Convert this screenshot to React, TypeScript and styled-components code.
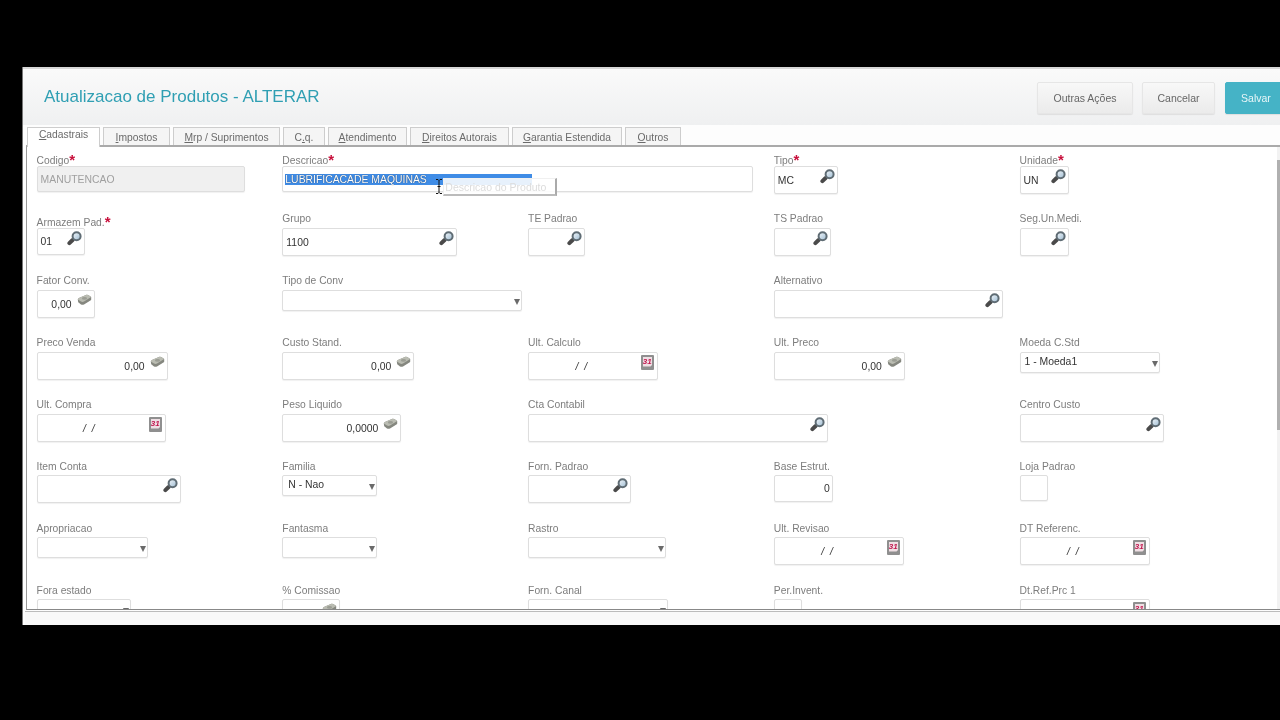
import React from "react";
import styled, { createGlobalStyle } from "styled-components";

const Global = createGlobalStyle`
  html, body { margin: 0; padding: 0; background: #000; overflow: hidden; }
  body { font-family: "Liberation Sans", Arial, sans-serif; }
`;

const Stage = styled.div`
  width: 1280px;
  height: 720px;
  background: #000;
  padding: 67px 0 0 22px;
  box-sizing: border-box;
  overflow: hidden;
`;
const Win = styled.div`
  width: 1258px;
  height: 558px;
  background: #fdfdfd;
  border-left: 1px solid #777;
  box-sizing: border-box;
  overflow: hidden;
  display: flex;
  flex-direction: column;
  filter: blur(0.45px);
`;
const Header = styled.header`
  height: 58px;
  flex: none;
  box-sizing: border-box;
  border-top: 2px solid #d8d8d8;
  background: linear-gradient(#fafafa, #eff0f1);
  display: flex;
  align-items: center;
  justify-content: space-between;
  padding-left: 21px;
`;
const Title = styled.h1`
  margin: 0;
  font-size: 17px;
  font-weight: 400;
  color: #2f9fb3;
`;
const Actions = styled.div`
  display: flex;
  gap: 9px;
  margin-right: -7px;
  margin-top: 2px;
`;
const Action = styled.button<{ $w: number; $primary?: boolean }>`
  width: ${(p) => p.$w}px;
  height: 32px;
  font: 10.5px "Liberation Sans", sans-serif;
  border-radius: 2px;
  border: 1px solid ${(p) => (p.$primary ? "#45b3c6" : "#e6e6e6")};
  background: ${(p) => (p.$primary ? "#45b3c6" : "linear-gradient(#f8f8f8,#ebebeb)")};
  color: ${(p) => (p.$primary ? "#e8f6f8" : "#666")};
  box-shadow: 0 1px 1px rgba(0, 0, 0, 0.08);
  padding: 0;
  flex: none;
  margin-left: ${(p) => (p.$primary ? 1 : 0)}px;
`;
const TabBar = styled.nav`
  height: 20px;
  flex: none;
  display: flex;
  gap: 3px;
  padding: 2px 0 0 4px;
  box-sizing: border-box;
  background: #fdfdfd;
  position: relative;
  z-index: 1;
`;
const Tab = styled.div<{ $w: number; $active?: boolean }>`
  width: ${(p) => p.$w}px;
  height: ${(p) => (p.$active ? 20 : 18)}px;
  box-sizing: border-box;
  border: 1px solid #cdcdcd;
  border-bottom: ${(p) => (p.$active ? "none" : "0")};
  background: ${(p) => (p.$active ? "#fff" : "#f5f5f5")};
  font-size: 10.3px;
  color: #6b6b6b;
  text-align: center;
  line-height: ${(p) => (p.$active ? 14 : 19)}px;
  flex: none;
`;
const Panel = styled.main`
  flex: none;
  height: 465px;
  margin-left: 3px;
  box-sizing: border-box;
  border-top: 2px solid #aaa;
  border-left: 1px solid #999;
  border-bottom: 1px solid #888;
  background: #fff;
  overflow: hidden;
  position: relative;
  padding: 8px 0 0 9.6px;
`;
const Form = styled.div`
  display: grid;
  grid-template-columns: repeat(5, 245.75px);
  grid-template-rows: 58px repeat(7, 62px);
`;
const Cell = styled.div`
  display: flex;
  flex-direction: column;
  align-items: flex-start;
`;
const Label = styled.label<{ $gap: number; $drop?: number }>`
  height: 12px;
  line-height: 12px;
  font-size: 10.3px;
  color: #7d7d7d;
  white-space: nowrap;
  margin-top: ${(p) => p.$drop ?? 0}px;
  margin-bottom: ${(p) => p.$gap - 1 - (p.$drop ?? 0)}px;
`;
const Star = styled.span`
  color: #c8103c;
  font-size: 15px;
  font-weight: 700;
  line-height: 10px;
  vertical-align: -1px;
`;
const Box = styled.div<{ $w: number; $h: number; $off?: boolean }>`
  position: relative;
  flex: none;
  width: ${(p) => p.$w}px;
  height: ${(p) => p.$h}px;
  box-sizing: border-box;
  border: 1px solid #dedede;
  border-radius: 2px;
  background: ${(p) => (p.$off ? "#f0f0f0" : "#fff")};
  box-shadow: 0 1px 1px rgba(0, 0, 0, 0.06);
  font-size: 10.4px;
  color: ${(p) => (p.$off ? "#a0a0a0" : "#333")};
  display: flex;
  align-items: center;
`;
const Value = styled.span<{ $right?: number; $left?: number; $lift?: number; $date?: boolean }>`
  white-space: nowrap;
  word-spacing: ${(p) => (p.$date ? 3 : 0)}px;
  font-style: ${(p) => (p.$date ? "italic" : "normal")};
  padding-left: ${(p) => p.$left ?? 3}px;
  margin-left: ${(p) => (p.$right !== undefined ? "auto" : 0)};
  padding-right: ${(p) => p.$right ?? 0}px;
  position: relative;
  top: ${(p) => p.$lift ?? 0}px;
`;
const Adorn = styled.span<{ $top: number; $right: number }>`
  position: absolute;
  top: ${(p) => p.$top}px;
  right: ${(p) => p.$right}px;
  display: flex;
`;
const Caret = styled.span`
  position: absolute;
  right: 1px;
  top: 8px;
  border-left: 3.5px solid transparent;
  border-right: 3.5px solid transparent;
  border-top: 6px solid #6a6a6a;
`;
const Selected = styled.span`
  display: inline-block;
  width: 247px;
  height: 11px;
  line-height: 11px;
  margin: 0 0 0 2px;
  background: #3f8ce6;
  color: #fff;
  text-shadow: 0 0 1px #123;
  white-space: nowrap;
`;
const Tooltip = styled.div`
  position: absolute;
  left: 160px;
  top: 11px;
  width: 114px;
  height: 18px;
  box-sizing: border-box;
  background: rgba(255, 255, 255, 0.88);
  border: 1px solid #f0f0f0;
  border-right: 2px solid #aaa;
  border-bottom: 2px solid #bbb;
  color: #dcdcdc;
  font-size: 10.5px;
  line-height: 16px;
  padding-left: 1px;
  white-space: nowrap;
`;
const Beam = styled.svg`
  position: absolute;
  left: 152px;
  top: 12px;
`;
const ScrollThumb = styled.div`
  position: absolute;
  top: 13px;
  right: 0;
  width: 3px;
  height: 270px;
  background: #b0b0b0;
`;
const ScrollTrack = styled.div`
  position: absolute;
  top: 0;
  bottom: 0;
  right: 0;
  width: 3px;
  background: #f2f2f2;
`;
const Footer = styled.footer`
  flex: 1;
  margin-top: 1px;
  margin-left: 2px;
  border-top: 1px solid #bcbcbc;
  background: #f9f9f9;
`;

const Lens = () => (
  <svg width="15" height="15" viewBox="0 0 15 15">
    <defs>
      <linearGradient id="lensFill" x1="0" y1="0" x2="1" y2="1">
        <stop offset="0" stopColor="#f4f8fb" />
        <stop offset="1" stopColor="#9dbbd2" />
      </linearGradient>
    </defs>
    <path d="M5.6 9 L2.4 12.2" stroke="#4a4a4a" strokeWidth="4" strokeLinecap="round" />
    <circle cx="9.6" cy="5.2" r="4" fill="url(#lensFill)" stroke="#5f6c74" strokeWidth="2" />
  </svg>
);
const Cash = () => (
  <svg width="15" height="12" viewBox="0 0 15 12">
    <path d="M.8 5.5 C.8 4.6 1.6 4 3 3.4 L9 1 C10 .6 11 .8 12 1.4 L14.2 3 L14.2 5.4 C14.2 6 13.6 6.4 13 6.8 L7 10.4 C6 11 5 11 4 10.4 L1.2 8.2 Z" fill="#85877f" />
    <path d="M.8 5.5 C.8 4.6 1.6 4 3 3.4 L9 1 C10 .6 11 .8 12 1.4 L14.2 3 L7 7.6 C6 8.2 5 8.2 4 7.6 Z" fill="#babcb2" />
    <ellipse cx="7.5" cy="4.4" rx="2.6" ry="1.3" fill="#9b9d94" />
  </svg>
);
const Cal = () => (
  <svg width="13" height="15" viewBox="0 0 13 15">
    <rect x="0" y="0" width="13" height="15" rx="1" fill="#8f8f8f" />
    <path d="M2 2 H11 V10 L9.5 11.5 H2 Z" fill="#efdfe4" />
    <text x="6.3" y="9.4" textAnchor="middle" fontSize="8" fontWeight="700" fontStyle="italic" fill="#c2184f" fontFamily="Liberation Sans, sans-serif">31</text>
  </svg>
);

type Kind = "lens" | "cash" | "cal" | "select" | "plain";
type F = {
  l?: string;
  req?: boolean;
  w?: number;
  h?: number;
  k?: Kind;
  v?: string;
  right?: number;
  off?: boolean;
  left?: number;
  drop?: number;
};

const rows: { gap: number; f: F[] }[] = [
  {
    gap: 0,
    f: [
      { l: "Codigo", req: true, w: 208, h: 26, k: "plain", v: "MANUTENCAO", off: true },
      { l: "Descricao", req: true, w: 471, h: 26, k: "plain" },
      {},
      { l: "Tipo", req: true, w: 64, h: 28, k: "lens", v: "MC" },
      { l: "Unidade", req: true, w: 49, h: 28, k: "lens", v: "UN" },
    ],
  },
  {
    gap: 4,
    f: [
      { l: "Armazem Pad.", req: true, w: 48, h: 27, k: "lens", v: "01", drop: 4 },
      { l: "Grupo", w: 175, h: 28, k: "lens", v: "1100" },
      { l: "TE Padrao", w: 57, h: 28, k: "lens" },
      { l: "TS Padrao", w: 57, h: 28, k: "lens" },
      { l: "Seg.Un.Medi.", w: 49, h: 28, k: "lens" },
    ],
  },
  {
    gap: 4,
    f: [
      { l: "Fator Conv.", w: 58, h: 28, k: "cash", v: "0,00", right: 22 },
      { l: "Tipo de Conv", w: 240, h: 21, k: "select" },
      {},
      { l: "Alternativo", w: 229, h: 28, k: "lens" },
      {},
    ],
  },
  {
    gap: 4,
    f: [
      { l: "Preco Venda", w: 131, h: 28, k: "cash", v: "0,00", right: 22 },
      { l: "Custo Stand.", w: 132, h: 28, k: "cash", v: "0,00", right: 22 },
      { l: "Ult. Calculo", w: 130, h: 28, k: "cal", v: "/ /", right: 70 },
      { l: "Ult. Preco", w: 131, h: 28, k: "cash", v: "0,00", right: 22 },
      { l: "Moeda C.Std", w: 140, h: 21, k: "select", v: "1 - Moeda1", left: 4 },
    ],
  },
  {
    gap: 4,
    f: [
      { l: "Ult. Compra", w: 129, h: 28, k: "cal", v: "/ /", right: 70 },
      { l: "Peso Liquido", w: 119, h: 28, k: "cash", v: "0,0000", right: 22 },
      { l: "Cta Contabil", w: 300, h: 28, k: "lens" },
      {},
      { l: "Centro Custo", w: 144, h: 28, k: "lens" },
    ],
  },
  {
    gap: 3,
    f: [
      { l: "Item Conta", w: 144, h: 28, k: "lens" },
      { l: "Familia", w: 95, h: 21, k: "select", v: "N - Nao", left: 5 },
      { l: "Forn. Padrao", w: 103, h: 28, k: "lens" },
      { l: "Base Estrut.", w: 59, h: 27, k: "plain", v: "0", right: 2 },
      { l: "Loja Padrao", w: 28, h: 26, k: "plain" },
    ],
  },
  {
    gap: 3,
    f: [
      { l: "Apropriacao", w: 111, h: 21, k: "select" },
      { l: "Fantasma", w: 95, h: 21, k: "select" },
      { l: "Rastro", w: 138, h: 21, k: "select" },
      { l: "Ult. Revisao", w: 130, h: 28, k: "cal", v: "/ /", right: 70 },
      { l: "DT Referenc.", w: 130, h: 28, k: "cal", v: "/ /", right: 70 },
    ],
  },
  {
    gap: 3,
    f: [
      { l: "Fora estado", w: 94, h: 21, k: "select" },
      { l: "% Comissao", w: 58, h: 28, k: "cash" },
      { l: "Forn. Canal", w: 140, h: 21, k: "select" },
      { l: "Per.Invent.", w: 28, h: 26, k: "plain" },
      { l: "Dt.Ref.Prc 1", w: 130, h: 28, k: "cal" },
    ],
  },
];

const Field = ({ f, gap, desc }: { f: F; gap: number; desc?: boolean }) => {
  if (!f.l) return <Cell />;
  return (
    <Cell>
      <Label $gap={gap} $drop={f.drop}>
        {f.l}
        {f.req && <Star>*</Star>}
      </Label>
      <Box $w={f.w!} $h={f.h!} $off={f.off}>
        {f.v && (
          <Value $right={f.right} $left={f.left} $lift={f.k === "select" ? -1 : 0} $date={f.k === "cal"}>
            {f.v}
          </Value>
        )}
        {f.k === "lens" && (
          <Adorn $top={2} $right={2}>
            <Lens />
          </Adorn>
        )}
        {f.k === "cash" && (
          <Adorn $top={3} $right={2}>
            <Cash />
          </Adorn>
        )}
        {f.k === "cal" && (
          <Adorn $top={2} $right={3}>
            <Cal />
          </Adorn>
        )}
        {f.k === "select" && <Caret />}
        {desc && (
          <>
            <Selected>LUBRIFICACADE MAQUINAS</Selected>
            <Tooltip>Descricao do Produto</Tooltip>
            <Beam width="8" height="15" viewBox="0 0 8 15">
              <path d="M1 .5h2l1 1 1-1h2M4 1.5v12M1 14.5h2l1-1 1 1h2M2.5 7.5h3" stroke="#111" strokeWidth="1" fill="none" />
            </Beam>
          </>
        )}
      </Box>
    </Cell>
  );
};

const tabs: [number, React.ReactNode][] = [
  [73, <><u>C</u>adastrais</>],
  [67, <><u>I</u>mpostos</>],
  [107, <><u>M</u>rp / Suprimentos</>],
  [42, <>C<u>.</u>q.</>],
  [79, <><u>A</u>tendimento</>],
  [99, <><u>D</u>ireitos Autorais</>],
  [110, <><u>G</u>arantia Estendida</>],
  [56, <><u>O</u>utros</>],
];

export default function App() {
  return (
    <Stage>
      <Global />
      <Win>
        <Header>
          <Title>Atualizacao de Produtos - ALTERAR</Title>
          <Actions>
            <Action $w={96}>Outras Ações</Action>
            <Action $w={73}>Cancelar</Action>
            <Action $w={62} $primary>Salvar</Action>
          </Actions>
        </Header>
        <TabBar>
          {tabs.map(([w, t], i) => (
            <Tab key={i} $w={w} $active={i === 0}>
              {t}
            </Tab>
          ))}
        </TabBar>
        <Panel>
          <Form>
            {rows.map((r, ri) =>
              r.f.map((f, fi) => (
                <Field key={`${ri}-${fi}`} f={f} gap={r.gap} desc={ri === 0 && fi === 1} />
              ))
            )}
          </Form>
          <ScrollTrack />
          <ScrollThumb />
        </Panel>
        <Footer />
      </Win>
    </Stage>
  );
}
